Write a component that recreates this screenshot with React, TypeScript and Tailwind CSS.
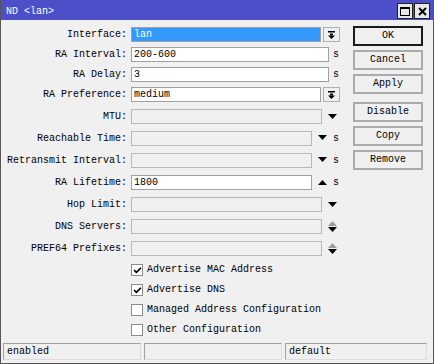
import { Check } from 'lucide-react';

type Row = {
  label: string;
  value?: string;
  kind: 'select' | 'unit' | 'arrow' | 'arrowUnit' | 'upUnit' | 'upDown';
  on?: boolean;
  sel?: boolean;
  mt: string;
};

const rows: Row[] = [
  { label: 'Interface:', value: 'lan', kind: 'select', on: true, sel: true, mt: 'mt-0' },
  { label: 'RA Interval:', value: '200-600', kind: 'unit', on: true, mt: 'mt-[5px]' },
  { label: 'RA Delay:', value: '3', kind: 'unit', on: true, mt: 'mt-[5px]' },
  { label: 'RA Preference:', value: 'medium', kind: 'select', on: true, mt: 'mt-[5px]' },
  { label: 'MTU:', kind: 'arrow', mt: 'mt-[7px]' },
  { label: 'Reachable Time:', kind: 'arrowUnit', mt: 'mt-[7px]' },
  { label: 'Retransmit Interval:', kind: 'arrowUnit', mt: 'mt-[7px]' },
  { label: 'RA Lifetime:', value: '1800', kind: 'upUnit', on: true, mt: 'mt-[7px]' },
  { label: 'Hop Limit:', kind: 'arrow', mt: 'mt-[7px]' },
  { label: 'DNS Servers:', kind: 'upDown', mt: 'mt-[7px]' },
  { label: 'PREF64 Prefixes:', kind: 'upDown', mt: 'mt-[7px]' },
];

const checks = [
  { label: 'Advertise MAC Address', on: true },
  { label: 'Advertise DNS', on: true },
  { label: 'Managed Address Configuration', on: false },
  { label: 'Other Configuration', on: false },
];

const buttons = ['OK', 'Cancel', 'Apply', 'Disable', 'Copy', 'Remove'];

function Down({ color = '#000' }: { color?: string }) {
  return (
    <svg width="9" height="5" viewBox="0 0 9 5">
      <polygon points="0,0 9,0 4.5,5" fill={color} />
    </svg>
  );
}

function Up({ color = '#000' }: { color?: string }) {
  return (
    <svg width="9" height="5" viewBox="0 0 9 5">
      <polygon points="0,5 9,5 4.5,0" fill={color} />
    </svg>
  );
}

function Field({ row, width }: { row: Row; width: string }) {
  return (
    <div
      className={`${width} h-[15px] border flex items-center pl-[2px] ${
        row.sel
          ? 'bg-[#3399ff] border-[#a0a0a0] text-white'
          : row.on
          ? 'bg-white border-[#a0a0a0]'
          : 'bg-[#f0f0f0] border-[#b8b8b8]'
      }`}
    >
      {row.value}
    </div>
  );
}

function FormRow({ row }: { row: Row }) {
  return (
    <div className={`flex items-center h-[15px] ${row.mt}`}>
      <div className="w-[126px] text-right whitespace-pre">{row.label}</div>
      <div className="ml-[4px] flex items-center">
        {row.kind === 'select' && (
          <>
            <Field row={row} width="w-[190px]" />
            <div className="ml-[2px] w-[17px] h-[15px] border border-[#b0b0b0] bg-[#f0f0f0] flex items-center justify-center">
              <svg width="7" height="8" viewBox="0 0 7 8">
                <rect x="0" y="0" width="7" height="1.5" fill="#000" />
                <rect x="2" y="2.5" width="3" height="2" fill="#000" />
                <polygon points="0,4.5 7,4.5 3.5,8" fill="#000" />
              </svg>
            </div>
          </>
        )}
        {row.kind === 'unit' && (
          <>
            <Field row={row} width="w-[198px]" />
            <span className="ml-[4px]">s</span>
          </>
        )}
        {row.kind === 'arrow' && (
          <>
            <Field row={row} width="w-[191px]" />
            <div className="ml-[6px] flex">
              <Down />
            </div>
          </>
        )}
        {row.kind === 'arrowUnit' && (
          <>
            <Field row={row} width="w-[181px]" />
            <div className="ml-[6px] flex -mt-[3px]">
              <Down />
            </div>
            <span className="ml-[6px]">s</span>
          </>
        )}
        {row.kind === 'upUnit' && (
          <>
            <Field row={row} width="w-[181px]" />
            <div className="ml-[6px] flex">
              <Up />
            </div>
            <span className="ml-[6px]">s</span>
          </>
        )}
        {row.kind === 'upDown' && (
          <>
            <Field row={row} width="w-[191px]" />
            <div className="ml-[6px] flex flex-col gap-[1px]">
              <Up color="#9a9e98" />
              <Down />
            </div>
          </>
        )}
      </div>
    </div>
  );
}

export default function App() {
  return (
    <div className="w-[434px] h-[364px] flex flex-col bg-[#f0f0f0] border-x border-b border-[#555] text-[10px] leading-none text-black font-['Liberation_Mono',monospace]">
      {/* title bar */}
      <div className="h-[20px] bg-[#4c4fc8] flex items-center pl-[5px] pr-[3px] text-white">
        <span className="whitespace-pre mt-[4px]">ND &lt;lan&gt;</span>
        <div className="ml-auto flex gap-[1px] mt-[2px]">
          <div className="w-[16px] h-[16px] bg-[#e8e8e8] border border-[#222] flex items-center justify-center">
            <div className="w-[10px] h-[9px] border border-black border-t-2" />
          </div>
          <div className="w-[16px] h-[16px] bg-[#e8e8e8] border border-[#222] flex items-center justify-center">
            <svg width="9" height="9" viewBox="0 0 9 9">
              <path d="M1 1 L8 8 M8 1 L1 8" stroke="#000" strokeWidth="2" />
            </svg>
          </div>
        </div>
      </div>

      <div className="flex flex-1">
        <div className="w-[352px] flex flex-col pt-[7px]">
          {rows.map((r) => (
            <FormRow key={r.label} row={r} />
          ))}
          <div className="flex flex-col gap-[8px] mt-[8px] pl-[130px]">
            {checks.map((c) => (
              <div key={c.label} className="flex items-center h-[12px]">
                <div className="w-[12px] h-[12px] bg-white border border-[#8c8c8c] flex items-center justify-center">
                  {c.on && <Check size={9} strokeWidth={4.5} color="#000" />}
                </div>
                <span className="ml-[4px] whitespace-pre">{c.label}</span>
              </div>
            ))}
          </div>
        </div>

        <div className="w-[70px] flex flex-col pt-[6px] gap-[4px]">
          {buttons.map((b, i) => (
            <div
              key={b}
              className={`h-[20px] flex items-center justify-center bg-[#f0f0f0] ${
                i === 0 ? 'border-2 border-[#1a1a1a]' : 'border-2 border-[#ababab]'
              } ${i === 3 ? 'mt-[4px]' : ''}`}
            >
              {b}
            </div>
          ))}
        </div>
      </div>

      <div className="flex gap-[3px] pl-[2px] h-[17px] mb-[3px]">
        {[
          { t: 'enabled', w: 'w-[138px]' },
          { t: '', w: 'w-[138px]' },
          { t: 'default', w: 'w-[142px]' },
        ].map((p, i) => (
          <div
            key={i}
            className={`${p.w} h-full flex items-center pl-[3px] border border-t-[#a0a0a0] border-l-[#a0a0a0] border-b-[#dcdcdc] border-r-[#dcdcdc]`}
          >
            {p.t}
          </div>
        ))}
      </div>
    </div>
  );
}
